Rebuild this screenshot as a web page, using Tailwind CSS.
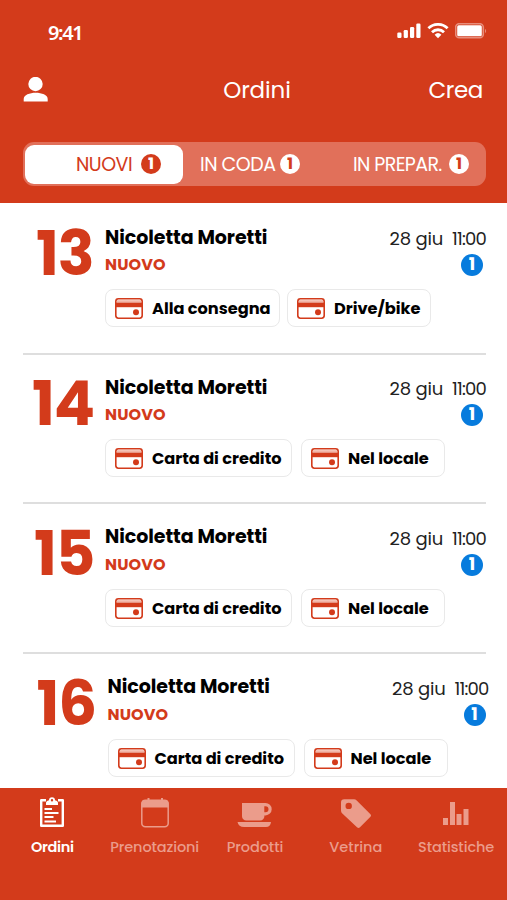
<!DOCTYPE html>
<html lang="it">
	<head>
		<meta charset="UTF-8" />
		<meta name="viewport" content="width=device-width, initial-scale=1" />
		<title>Ordini</title>
		<script src="https://cdn.jsdelivr.net/npm/@tailwindcss/browser@4"></script>
	</head>
	<body class="bg-white font-[Poppins,Inter,sans-serif] text-black">
		<!-- Shared icons -->
		<svg class="hidden">
			<symbol id="card" viewBox="0 0 28 21">
				<rect x="0.8" y="0.8" width="26.4" height="19.4" rx="2.6" fill="white" stroke="#d33b1b" stroke-width="1.6" />
				<path d="M2 2.2h24v2.4H2z" fill="#f2b5a7" />
				<path d="M1 4.6h26v4.6H1z" fill="#d33b1b" />
				<circle cx="21" cy="14.2" r="3" fill="#d33b1b" />
			</symbol>
		</svg>

		<div class="flex h-[900px] w-[507px] flex-col overflow-hidden">
			<header class="flex h-[203px] shrink-0 flex-col bg-[#d33b1b] text-white">
				<!-- Status bar -->
				<div class="flex h-[61px] items-center justify-between pt-1 pr-5 pl-12">
					<span class="font-['Noto_Sans'] text-xl leading-5 font-semibold tracking-[-1.4px]">9:41</span>
					<div class="flex items-center gap-[6px] pb-1">
						<svg width="24" height="16" viewBox="0 0 24 16" fill="white">
							<rect x="0.3" y="9.5" width="4.2" height="5.5" rx="1.2" />
							<rect x="6.7" y="7" width="4.2" height="8" rx="1.2" />
							<rect x="13" y="4" width="4.2" height="11" rx="1.2" />
							<rect x="19.3" y="0.5" width="4.2" height="14.5" rx="1.2" />
						</svg>
						<svg width="22" height="16" viewBox="0 0 22 16">
							<g fill="none" stroke="white" stroke-width="2.8">
								<path d="M1.4 5.2a14 14 0 0 1 19.2 0" />
								<path d="M5 9.2a8.6 8.6 0 0 1 12 0" />
							</g>
							<path d="M7.6 11.7a5 5 0 0 1 6.8 0L11 15.2z" fill="white" />
						</svg>
						<svg width="32" height="16" viewBox="0 0 32 16">
							<rect x="0.7" y="0.7" width="27.6" height="14" rx="3.5" fill="none" stroke="#e88d7b" stroke-width="1.6" />
							<rect x="2.2" y="2.2" width="24.6" height="11" rx="1.5" fill="white" />
							<path d="M30 6v4c1.5-.6 1.5-3.4 0-4z" fill="#e88d7b" />
						</svg>
					</div>
				</div>

				<!-- Title bar -->
				<div class="grid h-[58px] grid-cols-3 items-center pr-6 pl-[23px] text-[23px]">
					<svg width="26" height="26" viewBox="0 0 26 26" fill="white">
						<circle cx="12.5" cy="7" r="7.2" />
						<path d="M.7 24.500v-2.500c0-4 6-6.200 12-6.200s12 2.200 12 6.200v2.500z" />
					</svg>
					<h1 class="justify-self-center pl-2 tracking-[-0.1px]">Ordini</h1>
					<button class="justify-self-end tracking-[-0.4px]">Crea</button>
				</div>

				<!-- Tabs -->
				<nav class="mt-[23px] ml-[23px] flex h-11 w-[463px] items-center rounded-[11px] bg-[#e1705a] p-[2px] text-[19px]">
					<button class="flex h-[39px] w-[158px] items-center rounded-[9px] bg-white pl-[51px] text-[#d33b1b]">
						<span class="w-[65px] pt-[2px] text-left tracking-[-0.5px]">NUOVI</span>
						<span class="flex size-5 items-center justify-center rounded-full bg-[#d33b1b] text-base font-bold text-white">1</span>
					</button>
					<button class="flex items-center pl-[17px]">
						<span class="w-20 pt-[2px] text-left tracking-[-0.5px]">IN CODA</span>
						<span class="flex size-5 items-center justify-center rounded-full bg-white text-base font-bold text-[#d33b1b]">1</span>
					</button>
					<button class="flex items-center pl-[53px]">
						<span class="w-24 pt-[2px] text-left tracking-[-0.6px]">IN PREPAR.</span>
						<span class="flex size-5 items-center justify-center rounded-full bg-white text-base font-bold text-[#d33b1b]">1</span>
					</button>
				</nav>
			</header>

			<!-- Orders -->
			<main class="flex h-[585px] shrink-0 flex-col overflow-hidden pl-[23px]">
				<article class="flex h-[152px] w-[463px] shrink-0 border-b-2 border-[#dedede] pt-[23px]">
					<div class="w-[82px] shrink-0 pt-px pl-[13px] text-[61px] leading-[54px] font-bold tracking-[-1.2px] text-[#d33b1b]">13</div>
					<div class="flex grow flex-col">
						<div class="flex justify-between">
							<div>
								<h2 class="pt-px text-[19px] leading-[22px] font-bold tracking-[-0.07px]">Nicoletta Moretti</h2>
								<p class="mt-[5px] text-base leading-[22px] font-bold tracking-[0.1px] text-[#d33b1b]">NUOVO</p>
							</div>
							<div class="flex flex-col items-end">
								<p class="flex gap-[9px] pt-[2px] text-lg leading-[22px] tracking-[-0.2px] text-[#222]"><span>28 giu</span><span class="tracking-[-0.8px]">11:00</span></p>
								<span class="mt-1 mr-[3px] flex size-[22px] items-center justify-center rounded-full bg-[#077bdd] text-[17px] font-bold text-white">1</span>
							</div>
						</div>
						<div class="mt-[13px] flex gap-[7px] text-[16.2px] font-bold tracking-[-0.02px]">
							<span class="flex h-[38px] w-[175px] items-center gap-[9px] rounded-lg border-[1.5px] border-[#e9e9e9] pl-[9px] whitespace-nowrap"><svg width="28" height="21" class="shrink-0"><use href="#card" /></svg><span class="pt-[2px]">Alla consegna</span></span>
							<span class="flex h-[38px] w-36 items-center gap-[9px] rounded-lg border-[1.5px] border-[#e9e9e9] pl-[9px] whitespace-nowrap"><svg width="28" height="21" class="shrink-0"><use href="#card" /></svg><span class="pt-[2px]">Drive/bike</span></span>
						</div>
					</div>
				</article>

				<article class="flex h-[149px] w-[463px] shrink-0 border-b-2 border-[#dedede] pt-[21px]">
					<div class="w-[82px] shrink-0 pt-px pl-[9px] text-[61px] leading-[54px] font-bold tracking-[-1.2px] text-[#d33b1b]">14</div>
					<div class="flex grow flex-col">
						<div class="flex justify-between">
							<div>
								<h2 class="pt-px text-[19px] leading-[22px] font-bold tracking-[-0.07px]">Nicoletta Moretti</h2>
								<p class="mt-[5px] text-base leading-[22px] font-bold tracking-[0.1px] text-[#d33b1b]">NUOVO</p>
							</div>
							<div class="flex flex-col items-end">
								<p class="flex gap-[9px] pt-[2px] text-lg leading-[22px] tracking-[-0.2px] text-[#222]"><span>28 giu</span><span class="tracking-[-0.8px]">11:00</span></p>
								<span class="mt-1 mr-[3px] flex size-[22px] items-center justify-center rounded-full bg-[#077bdd] text-[17px] font-bold text-white">1</span>
							</div>
						</div>
						<div class="mt-[13px] flex gap-[9px] text-[16.2px] font-bold tracking-[-0.02px]">
							<span class="flex h-[38px] w-[187px] items-center gap-[9px] rounded-lg border-[1.5px] border-[#e9e9e9] pl-[9px] whitespace-nowrap"><svg width="28" height="21" class="shrink-0"><use href="#card" /></svg><span class="pt-[2px]">Carta di credito</span></span>
							<span class="flex h-[38px] w-36 items-center gap-[9px] rounded-lg border-[1.5px] border-[#e9e9e9] pl-[9px] whitespace-nowrap"><svg width="28" height="21" class="shrink-0"><use href="#card" /></svg><span class="pt-[2px]">Nel locale</span></span>
						</div>
					</div>
				</article>

				<article class="flex h-[150px] w-[463px] shrink-0 border-b-2 border-[#dedede] pt-[22px]">
					<div class="w-[82px] shrink-0 pt-px pl-[11px] text-[61px] leading-[54px] font-bold tracking-[-1.2px] text-[#d33b1b]">15</div>
					<div class="flex grow flex-col">
						<div class="flex justify-between">
							<div>
								<h2 class="text-[19px] leading-[22px] font-bold tracking-[-0.07px]">Nicoletta Moretti</h2>
								<p class="mt-[6px] text-base leading-[22px] font-bold tracking-[0.1px] text-[#d33b1b]">NUOVO</p>
							</div>
							<div class="flex flex-col items-end">
								<p class="flex gap-[9px] pt-[2px] text-lg leading-[22px] tracking-[-0.2px] text-[#222]"><span>28 giu</span><span class="tracking-[-0.8px]">11:00</span></p>
								<span class="mt-1 mr-[3px] flex size-[22px] items-center justify-center rounded-full bg-[#077bdd] text-[17px] font-bold text-white">1</span>
							</div>
						</div>
						<div class="mt-[13px] flex gap-[9px] text-[16.2px] font-bold tracking-[-0.02px]">
							<span class="flex h-[38px] w-[187px] items-center gap-[9px] rounded-lg border-[1.5px] border-[#e9e9e9] pl-[9px] whitespace-nowrap"><svg width="28" height="21" class="shrink-0"><use href="#card" /></svg><span class="pt-[2px]">Carta di credito</span></span>
							<span class="flex h-[38px] w-36 items-center gap-[9px] rounded-lg border-[1.5px] border-[#e9e9e9] pl-[9px] whitespace-nowrap"><svg width="28" height="21" class="shrink-0"><use href="#card" /></svg><span class="pt-[2px]">Nel locale</span></span>
						</div>
					</div>
				</article>

				<article class="ml-[2.5px] flex w-[463px] shrink-0 pt-[22px]">
					<div class="w-[82px] shrink-0 pt-px pl-[11px] text-[61px] leading-[54px] font-bold tracking-[-1.2px] text-[#d33b1b]">16</div>
					<div class="flex grow flex-col">
						<div class="flex justify-between">
							<div>
								<h2 class="text-[19px] leading-[22px] font-bold tracking-[-0.07px]">Nicoletta Moretti</h2>
								<p class="mt-[6px] text-base leading-[22px] font-bold tracking-[0.1px] text-[#d33b1b]">NUOVO</p>
							</div>
							<div class="flex flex-col items-end">
								<p class="flex gap-[9px] pt-[2px] text-lg leading-[22px] tracking-[-0.2px] text-[#222]"><span>28 giu</span><span class="tracking-[-0.8px]">11:00</span></p>
								<span class="mt-1 mr-[3px] flex size-[22px] items-center justify-center rounded-full bg-[#077bdd] text-[17px] font-bold text-white">1</span>
							</div>
						</div>
						<div class="mt-[13px] flex gap-[9px] text-[16.2px] font-bold tracking-[-0.02px]">
							<span class="flex h-[38px] w-[187px] items-center gap-[9px] rounded-lg border-[1.5px] border-[#e9e9e9] pl-[9px] whitespace-nowrap"><svg width="28" height="21" class="shrink-0"><use href="#card" /></svg><span class="pt-[2px]">Carta di credito</span></span>
							<span class="flex h-[38px] w-36 items-center gap-[9px] rounded-lg border-[1.5px] border-[#e9e9e9] pl-[9px] whitespace-nowrap"><svg width="28" height="21" class="shrink-0"><use href="#card" /></svg><span class="pt-[2px]">Nel locale</span></span>
						</div>
					</div>
				</article>
			</main>

			<!-- Bottom navigation -->
			<footer class="grid h-28 w-[507px] shrink-0 grid-cols-5 items-start bg-[#d33b1b] pt-2 pl-[3px] text-[14.5px] leading-5 font-medium text-[#eb9c8b]">
				<a class="flex flex-col items-center gap-[9px] pr-[2px] font-semibold tracking-[-0.3px] text-white">
					<svg width="26" height="32" viewBox="0 0 26 32" fill="white">
						<path fill="none" stroke="white" stroke-width="2.4" stroke-linejoin="round" d="M7 4.200H2.200v25.500h21.600v-25.500H19" />
						<path fill-rule="evenodd" d="M7 9V6.500q.5-1.700 3-2.200a3 3 0 0 1 6 0q2.500.500 3 2.200V9zM13 3a1.200 1.200 0 1 0 0 2.400a1.200 1.200 0 0 0 0-2.400z" />
						<path d="M5.500 12h7.500v2H5.500zM5.500 16h14v2h-14zM5.500 20h9v2h-9zM5.500 24.500h11.500v2H5.500z" />
					</svg>
					Ordini
				</a>
				<a class="flex flex-col items-center gap-[9px] pl-px">
					<svg width="30" height="32" viewBox="0 0 30 32" fill="#eb9c8b">
						<rect x="1.8" y="4.2" width="26.4" height="26.6" rx="3.5" fill="none" stroke="#eb9c8b" stroke-width="1.5" />
						<path d="M1.500 11.500V7a3 3 0 0 1 3-3h21a3 3 0 0 1 3 3v4.500zM7.500 2h2v3h-2zM21 2h2v3h-2z" />
					</svg>
					<span class="tracking-[-0.12px]">Prenotazioni</span>
				</a>
				<a class="flex flex-col items-center gap-[9px]">
					<svg width="36" height="32" viewBox="0 0 36 32" fill="#eb9c8b">
						<path fill-rule="evenodd" d="M5 7h23.500a6.200 6.200 0 0 1 0 12.400h-1.200a4.300 4.300 0 0 1-4.300 5.100H9.300A4.300 4.300 0 0 1 5 20.200zM27.300 10.300v6h1.200a3 3 0 0 0 0-6z" />
						<path d="M.5 26h33.500q-.5 5-5 5h-22Q1.500 31 .5 26z" />
					</svg>
					<span class="tracking-[-0.1px]">Prodotti</span>
				</a>
				<a class="flex flex-col items-center gap-[9px]">
					<svg width="32" height="32" viewBox="0 0 32 32" fill="#eb9c8b">
						<path fill-rule="evenodd" d="M1 6.500A3.300 3.300 0 0 1 4.300 3.200H14q1.500 0 2.700 1.200L30.200 18q1.600 1.500 0 3L20 31.200q-1.500 1.500-3 0L2.300 17.500Q1 16.300 1 14.500zM8.700 6.700a3.200 3.200 0 1 0 0 6.400a3.200 3.200 0 0 0 0-6.400z" />
					</svg>
					<span>Vetrina</span>
				</a>
				<a class="flex flex-col items-center gap-[9px] pr-px">
					<svg width="28" height="32" viewBox="0 0 28 32" fill="#eb9c8b">
						<path d="M1 22h5v7H1zM8 6h5v23H8zM14.500 18h5v11h-5zM21.500 13h5v16h-5z" />
					</svg>
					<span class="tracking-[-0.1px]">Statistiche</span>
				</a>
			</footer>
		</div>
	</body>
</html>
